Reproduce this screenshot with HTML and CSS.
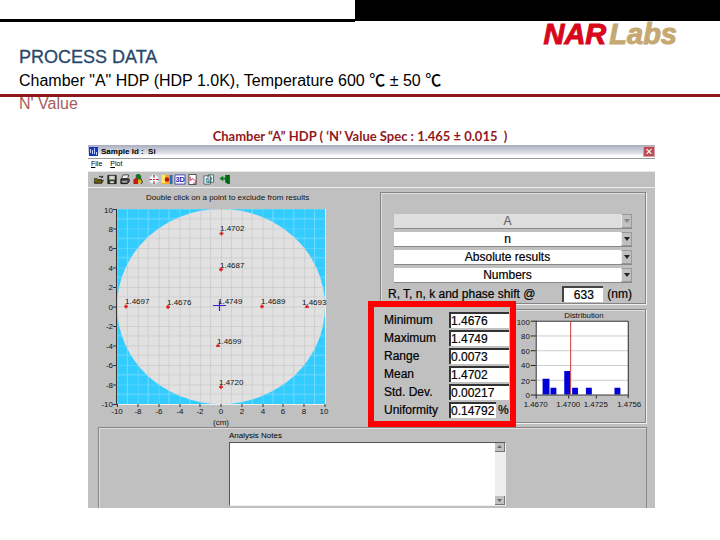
FILE: index.html
```html
<!DOCTYPE html>
<html lang="en">
<head>
<meta charset="utf-8">
<title>Process Data</title>
<link rel="stylesheet" href="styles.css">
</head>
<body>
<header class="band"><div class="band-left"></div><div class="band-right"></div></header>
<div class="brand"><span class="nar">NAR</span><span class="labs">Labs</span></div>
<h1 class="title">PROCESS DATA</h1>
<p class="subtitle">Chamber "A" HDP (HDP 1.0K), Temperature 600 <span class="unit">℃</span> ± 50 <span class="unit">℃</span></p>
<hr class="rule">
<p class="topic">N' Value</p>
<h2 class="caption">Chamber “A” HDP ( ‘N’ Value Spec : 1.465 ± 0.015 &nbsp;)</h2>
<main class="window">
  <div class="titlebar">
    <svg class="app-icon" width="9" height="9" viewBox="0 0 9 9"><path fill="#1538b8" d="M0 0h9v9H0z"/><path stroke="#bcd0ff" d="M1.5 2v4M3.5 3v4M5.5 1v6M7.5 5v3"/></svg>
    <span class="window-name">Sample Id : &nbsp;Si</span>
    <button class="close" aria-label="Close"><svg width="12" height="11" viewBox="0 0 12 11"><path stroke="#fff" stroke-width="1.4" d="M3 2.500l6 6M9 2.500l-6 6"/></svg></button>
  </div>
  <nav class="menu"><button><u>F</u>ile</button><button><u>P</u>lot</button></nav>
  <div class="toolbar">
    <button aria-label="Open"><svg viewBox="0 0 12 12"><path fill="#777000" stroke="#222" stroke-width=".7" d="M1 10V5h3l1 1h4v4zM1 10l3-3h7l-2 3z"/><path fill="none" stroke="#111" d="M6 3q2-2 3 1M8 3.500h2V2"/></svg></button>
    <button aria-label="Save"><svg viewBox="0 0 12 12"><path fill="#354229" stroke="#111" d="M1.500 1.500h9v9h-9z"/><path fill="#d6d6d6" d="M3 2h6v4H3zM4 8h4v2H4z"/></svg></button>
    <button aria-label="Print"><svg viewBox="0 0 12 12"><path fill="#eee" stroke="#222" stroke-width=".8" d="M4 1h6L9 5H2z"/><path fill="#555" stroke="#111" d="M1.500 5.500h9v3l-2 2h-7z"/><path stroke="#ddd" d="M3 8.500h5"/></svg></button>
    <button aria-label="Colors"><svg viewBox="0 0 12 12"><path fill="#087b20" stroke="#143414" stroke-width=".5" d="M4 1l3-1 2 2v4H4z"/><path fill="#c61616" d="M1 6l3-2 2 2v5H1z"/><path fill="#d5b911" d="M6 6h4v4H6z"/><path fill="none" stroke="#222" d="M9 5l2 4-2 2"/></svg></button>
    <button class="spaced" aria-label="Points"><svg viewBox="0 0 12 12"><circle cx="6" cy="6" r="5.500" fill="#fff"/><circle cx="6" cy="6" r="4.800" fill="none" stroke="#69b8cc" stroke-dasharray="2 1"/><path stroke="#bb2020" stroke-width="1.3" d="M6 1v3M6 8v3M1 6h3M8 6h3M5 6h2"/></svg></button>
    <button aria-label="Map"><svg viewBox="0 0 12 12"><path fill="#ffa51f" d="M0 1h12v10H0z"/><path fill="#ffe56a" d="M0 1h4v9H0z"/><circle cx="6" cy="6" r="2.500" fill="#b61b12"/><path fill="#1671ca" d="M9 1h3v10H9z"/></svg></button>
    <button aria-label="3D view"><svg viewBox="0 0 12 12"><path fill="#fff" stroke="#3a43b0" d="M.500 1h11v10H.500z"/><text class="tool-text" x="1" y="9">3D</text></svg></button>
    <button aria-label="Report"><svg viewBox="0 0 12 12"><path fill="#fff" stroke="#444" d="M1.500.500h8v11h-8z"/><path fill="none" stroke="#d41d43" d="M3 3v4l3-2 3 3v2H6"/></svg></button>
    <button class="spaced" aria-label="Copy"><svg viewBox="0 0 12 12"><path fill="#fff" stroke="#46616e" d="M.500 2h7v9h-7zM5 1h6v8H5z"/><path fill="none" stroke="#157a77" d="M5 5H3v4h3M7 4h2v2H7v2h2"/></svg></button>
    <button class="spaced" aria-label="Exit"><svg viewBox="0 0 12 12"><path fill="#078020" d="M0 5l4-3v2h2V1h5v10H9L6 9V6H4v2z"/><path stroke="#073e13" d="M8.500 1v9M10.500 1v10"/></svg></button>
  </div>
  <div class="workspace">
    <svg class="wafer" viewBox="88 188 292 239" role="img" aria-label="Wafer map">
      <defs>
        <pattern id="cells" x="117" y="209" width="20.8" height="19.500" patternUnits="userSpaceOnUse"><path class="cell-line" d="M10.400 0v19.500M0 9.750h20.800"/><path class="cell-line strong" d="M0 0v19.500M0 0h20.800"/></pattern>
        <pattern id="sky-cells" x="117" y="209" width="20.8" height="19.500" patternUnits="userSpaceOnUse"><path class="sky-line" d="M10.400 0v19.500M0 9.750h20.800M0 0v19.500M0 0h20.800"/></pattern>
      </defs>
      <text class="tiny" x="146" y="200">Double click on a point to exclude from results</text>
      <path fill="#33ccff" d="M117 209h208v195H117z"/><path fill="url(#sky-cells)" d="M117 209h208v195H117z"/>
      <ellipse cx="221" cy="306.500" rx="104" ry="97.500" fill="#e1e1e1"/><ellipse cx="221" cy="306.500" rx="104" ry="97.500" fill="url(#cells)"/>
      <path fill="none" stroke="#eee" d="M117 404.500h208.500V209"/>
      <path fill="none" stroke="#333" d="M116.500 209v195M113 209.500h4M113 229h4M113 248.500h4M113 268h4M113 287.500h4M113 307h4M113 326.500h4M113 346h4M113 365.500h4M113 385h4M113 404.500h4M117.500 404v3M138 404v3M159 404v3M180 404v3M200 404v3M221 404v3M242 404v3M263 404v3M283 404v3M304 404v3M325 404v3"/>
      <g class="tiny end"><text x="113" y="213">10</text><text x="113" y="232">8</text><text x="113" y="251">6</text><text x="113" y="271">4</text><text x="113" y="290">2</text><text x="113" y="310">0</text><text x="113" y="329">-2</text><text x="113" y="349">-4</text><text x="113" y="368">-6</text><text x="113" y="388">-8</text><text x="113" y="407">-10</text></g>
      <g class="tiny mid"><text x="117" y="414">-10</text><text x="138" y="414">-8</text><text x="159" y="414">-6</text><text x="180" y="414">-4</text><text x="200" y="414">-2</text><text x="221" y="414">0</text><text x="242" y="414">2</text><text x="263" y="414">4</text><text x="283" y="414">6</text><text x="304" y="414">8</text><text x="324" y="414">10</text><text x="221" y="425">(cm)</text></g>
      <g class="tiny"><text x="220" y="231">1.4702</text><text x="220" y="268">1.4687</text><text x="125" y="304">1.4697</text><text x="167" y="305">1.4676</text><text x="218" y="304">1.4749</text><text x="261" y="304">1.4689</text><text x="302" y="305">1.4693</text><text x="217" y="344">1.4699</text><text x="219" y="385">1.4720</text></g>
      <path stroke="#e01818" stroke-width="1.400" d="M219.500 233.500h4M221.500 231.500v4M219 269.500h4M221 267.500v4M124 306.500h4M126 304.500v4M166 307h4M168 305v4M260 306.500h4M262 304.500v4M305 307h4M307 305v3M216 346h4M218 344v3M219 387h4M221 385v4"/>
      <path stroke="#3322dd" stroke-width="1.200" d="M213 305.500h13M219.500 301v10"/>
    </svg>
    <div class="readings">
      <section class="panel options">
        <div class="picker disabled"><select aria-label="Layer" disabled><option>A</option></select><i></i></div>
        <div class="picker"><select aria-label="Quantity"><option>n</option></select><i></i></div>
        <div class="picker"><select aria-label="Result type"><option>Absolute results</option></select><i></i></div>
        <div class="picker"><select aria-label="Display"><option>Numbers</option></select><i></i></div>
        <div class="wavelength"><label for="wave">R, T, n, k and phase shift @</label><input id="wave" value="633"><span>(nm)</span></div>
      </section>
      <section class="panel results">
        <div class="stats">
          <label for="min">Minimum</label><input id="min" value="1.4676">
          <label for="max">Maximum</label><input id="max" value="1.4749">
          <label for="range">Range</label><input id="range" value="0.0073">
          <label for="mean">Mean</label><input id="mean" value="1.4702">
          <label for="dev">Std. Dev.</label><input id="dev" value="0.00217">
          <label for="uni">Uniformity</label><span class="percent"><input id="uni" value="0.14792">%</span>
        </div>
        <svg class="histogram" viewBox="515 310 131 112" role="img" aria-label="Distribution">
          <text class="tiny" x="564" y="317">Distribution</text>
          <path fill="#fff" d="M535 320h94v76h-94z"/>
          <path stroke="#ccc" d="M536 335.500h93M536 350.500h93M536 365.500h93M536 380.500h93"/>
          <path fill="#0000d8" d="M542 379h7v16h-7zM550 388h6v7h-6zM564 371h6v24h-6zM572 388h6v7h-6zM586 388h6v7h-6zM615 388h6v7h-6z"/>
          <path fill="none" stroke="#222" d="M535.500 320v79M535 320.500h94v78M535 395.500h94M530 320.500h5M530 335.500h5M530 350.500h5M530 365.500h5M530 380.500h5M530 395.500h5M568.500 396v3M596.500 396v3"/>
          <path stroke="#c33b35" d="M570.500 321v74"/>
          <g class="tiny end"><text x="529" y="324">100</text><text x="529" y="339">80</text><text x="529" y="354">60</text><text x="529" y="368">40</text><text x="529" y="384">20</text><text x="529" y="399">0</text></g>
          <g class="tiny mid"><text x="535" y="408">1.4670</text><text x="568" y="408">1.4700</text><text x="596" y="408">1.4725</text><text x="630" y="408">1.4756</text></g>
        </svg>
      </section>
    </div>
  </div>
  <section class="notes">
    <label for="notes">Analysis Notes</label>
    <div class="note-box"><textarea id="notes"></textarea><div class="scroll"><button aria-label="Scroll up"><svg width="9" height="8" viewBox="0 0 9 8"><path fill="#666" d="M2 5l2.500-3L7 5z"/></svg></button><button aria-label="Scroll down"><svg width="9" height="8" viewBox="0 0 9 8"><path fill="#666" d="M2 3l2.500 3L7 3z"/></svg></button></div></div>
  </section>
</main>
</body>
</html>
```
FILE: styles.css
```css
* { box-sizing: border-box; }
body { margin: 0; background: #fff; color: #000; font-family: "Liberation Sans", Arial, sans-serif; }
button, input, select, textarea { font: inherit; color: inherit; margin: 0; padding: 0; border: 0; border-radius: 0; background: none; }
button svg { display: block; }

.band { display: flex; height: 22px; }
.band-left { width: 355px; border-bottom: 3px solid #000; }
.band-right { flex: 1; height: 21px; background: #000; }
.brand { display: flex; justify-content: flex-end; gap: 3px; height: 26px; padding-right: 43px; line-height: 25px; font-style: italic; font-weight: 700; font-size: 29px; }
.nar { color: #d8071b; -webkit-text-stroke: 1px #d8071b; }
.labs { color: #c5a872; -webkit-text-stroke: 1px #c5a872; }

.title { margin: 0 19px; font-size: 18px; font-weight: 400; line-height: 18px; color: #28486c; -webkit-text-stroke: 0.3px #28486c; }
.subtitle { margin: 5px 19px 3px; font-size: 16px; line-height: 20px; }
.unit { font-family: "Liberation Sans", "Noto Sans CJK TC", sans-serif; font-weight: 500; line-height: 16px; }
.rule { height: 3px; margin: 0; border: 0; background: #8e171b; }
.topic { margin: 0 19px; font-size: 16px; line-height: 14px; color: #a85b5d; }
.caption { margin: 17px 0 1px; text-align: center; font-family: Lato, sans-serif; font-size: 13px; font-weight: 700; line-height: 16px; color: #93191c; }

.window { margin: 0 65px 32px 88px; background: #c0c0c0; font-size: 12px; }
.titlebar { display: flex; align-items: center; gap: 3px; height: 14px; padding: 0 0 0 1px; background: linear-gradient(#a9adc0, #dcdee6 60%, #fff 85%); border-bottom: 1px solid #999; }
.window-name { font-size: 8px; font-weight: 700; }
.close { margin-left: auto; background: #bd4b55; border: 1px solid #d2a2a6; }
.close svg { height: 9px; width: 10px; }
.menu { display: flex; gap: 8px; height: 13px; padding: 0 3px 4px; background: #fff; font-size: 7px; border-bottom: 1px solid #e8e8e8; }
.toolbar { display: flex; align-items: center; gap: 1px; height: 16px; padding-left: 5px; border-bottom: 1px solid #eee; }
.toolbar svg { width: 12px; height: 11px; }
.spaced { margin-left: 3px; }
.tool-text { font-size: 8px; font-weight: 700; fill: #2023b0; }

.workspace { display: grid; grid-template-columns: minmax(0, 292fr) minmax(0, 266fr); padding-right: 9px; }
.wafer { display: block; width: 100%; height: auto; }
.tiny { font-size: 8px; fill: #111; }
.end { text-anchor: end; }
.mid { text-anchor: middle; }
.cell-line { stroke: #cfcfcf; }
.strong { stroke: #bbb; }
.sky-line { stroke: #74daff; }

.readings { display: flex; flex-direction: column; gap: 5px; padding-top: 4px; -webkit-text-stroke: 0.2px; }
.panel { border: 1px solid #858585; box-shadow: 1px 1px #f0f0f0, inset 1px 1px #ddd; }
.options { display: flex; flex-direction: column; gap: 3px; height: 112px; padding: 21px 13px 0; }
.picker { display: flex; height: 15px; flex: none; background: #fff; border-bottom: 1px solid #888; }
.picker select { flex: 1; appearance: none; text-align: center; text-align-last: center; line-height: 14px; }
.picker i { display: flex; align-items: center; justify-content: center; width: 11px; background: #c0c0c0; border: 1px solid #999; border-left-color: #eee; }
.picker i::before { content: ""; border: 3px solid transparent; border-top: 4px solid #222; border-bottom: 0; }
.disabled { background: #dedede; }
.disabled select { color: #666; opacity: 1; }
.disabled i::before { border-top-color: #888; }
.wavelength { display: flex; align-items: center; height: 16px; margin: 0 0 0 -6px; white-space: nowrap; }
.wavelength input { width: 41px; height: 16px; margin: 0 4px 0 auto; text-align: center; background: #fff; border: 1px solid #444; border-width: 2px 0 0 2px; }

.results { display: flex; height: 114px; margin-left: -6px; }
.stats { position: relative; display: grid; grid-template-columns: 1fr 60px; align-content: start; gap: 2px 0; flex: none; width: 148px; height: 126px; margin: -9px 0 0 -7px; padding: 5px 1px 0 10px; border: 6px solid #f00; background: #c0c0c0; line-height: 16px; }
.stats input { width: 100%; height: 16px; background: #fff; border: 1px solid #333; border-width: 2px 0 0 2px; }
.percent { display: flex; gap: 2px; }
.percent input { flex: none; width: 47px; }
.histogram { display: block; flex: 1; min-width: 0; height: 112px; -webkit-text-stroke: 0; }

.notes { display: flex; flex-direction: column; height: 81px; margin: 0 8px 0 10px; padding: 2px 140px 2px 130px; border: 1px solid #888; border-bottom: 0; box-shadow: inset 1px 1px #ddd; font-size: 8px; line-height: 12px; }
.note-box { display: flex; flex: 1; background: #fff; border: 1px solid #555; border-bottom-color: #eee; border-right-color: #eee; }
.note-box textarea { flex: 1; min-width: 0; resize: none; }
.scroll { display: flex; flex-direction: column; justify-content: space-between; width: 10px; background: #eee; }
.scroll button { background: #c0c0c0; border: 1px solid #777; border-width: 0 1px 1px 0; }
```
